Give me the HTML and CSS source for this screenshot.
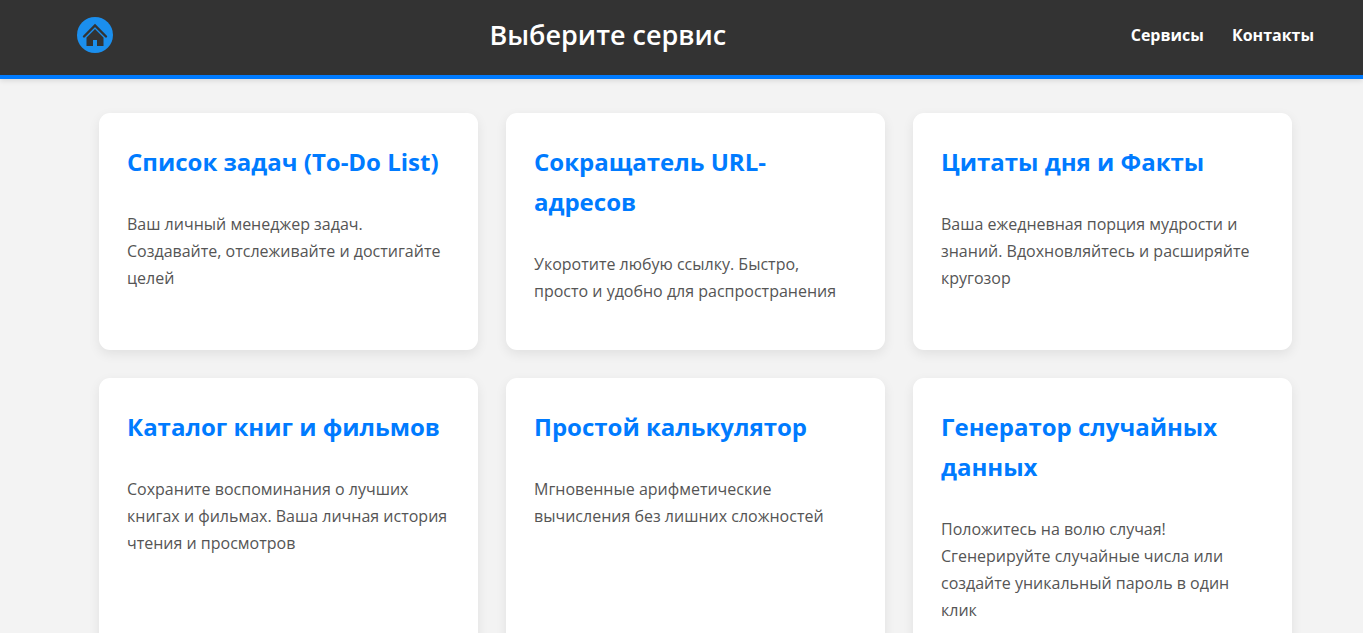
FILE: index.html
```html
<!DOCTYPE html>
<html lang="ru">
<head>
<meta charset="utf-8">
<meta name="viewport" content="width=device-width, initial-scale=1">
<title>Выберите сервис</title>
<link rel="stylesheet" href="styles.css">
</head>
<body>
<header class="header">
  <a class="logo" href="#" aria-label="Главная">
    <svg class="logo-icon" viewBox="0 0 36 36" aria-hidden="true">
      <circle cx="18" cy="18" r="18" fill="#1b8fee"/>
      <path d="M7 19.500 18 8.500 29 19.500" fill="none" stroke="#333" stroke-width="2.400" stroke-linecap="round"/>
      <path d="M18 12 26.500 20.500V29H20v-6h-4v6H9.500v-8.500z" fill="#333"/>
    </svg>
  </a>
  <h1 class="title">Выберите сервис</h1>
  <nav class="nav">
    <a class="nav-link" href="#">Сервисы</a>
    <a class="nav-link" href="#">Контакты</a>
  </nav>
</header>
<main class="services">
  <article class="card">
    <h2 class="card-title">Список задач (To-Do List)</h2>
    <p class="card-text">Ваш личный менеджер задач. Создавайте, отслеживайте и достигайте целей</p>
  </article>
  <article class="card">
    <h2 class="card-title">Сокращатель URL-адресов</h2>
    <p class="card-text">Укоротите любую ссылку. Быстро, просто и удобно для распространения</p>
  </article>
  <article class="card">
    <h2 class="card-title">Цитаты дня и Факты</h2>
    <p class="card-text">Ваша ежедневная порция мудрости и знаний. Вдохновляйтесь и расширяйте кругозор</p>
  </article>
  <article class="card">
    <h2 class="card-title">Каталог книг и фильмов</h2>
    <p class="card-text">Сохраните воспоминания о лучших книгах и фильмах. Ваша личная история чтения и просмотров</p>
  </article>
  <article class="card">
    <h2 class="card-title">Простой калькулятор</h2>
    <p class="card-text">Мгновенные арифметические вычисления без лишних сложностей</p>
  </article>
  <article class="card">
    <h2 class="card-title">Генератор случайных данных</h2>
    <p class="card-text">Положитесь на волю случая! Сгенерируйте случайные числа или создайте уникальный пароль в один клик</p>
  </article>
</main>
</body>
</html>
```

FILE: styles.css
```css
* {
  box-sizing: border-box;
}

html {
  scrollbar-width: none;
}

body {
  margin: 0;
  background: #f3f3f3;
  color: #333;
  font-family: "Segoe UI", "Open Sans", "Noto Sans", sans-serif;
  font-size: 16px;
  line-height: 27px;
}

.header {
  display: flex;
  align-items: center;
  gap: 28px;
  padding: 13px 49px 18px 77px;
  background: #333;
  border-bottom: 4px solid #007bff;
  box-shadow: 0 2px 5px rgba(0, 0, 0, 0.1);
}

.logo {
  display: flex;
  margin-right: -28px;
}

.logo-icon {
  display: block;
  width: 36px;
  height: 36px;
}

.title {
  flex: 1;
  margin: 0;
  color: #fff;
  font-size: 27px;
  font-weight: 600;
  line-height: 44px;
  text-align: center;
}

.nav {
  display: flex;
  gap: 28px;
}

.nav-link {
  color: #fff;
  font-size: 16px;
  font-weight: 700;
  text-decoration: none;
}

.services {
  display: grid;
  grid-template-columns: repeat(auto-fit, minmax(320px, 1fr));
  gap: 28px;
  padding: 34px 71px 34px 99px;
}

.card {
  padding: 29px 28px 28px;
  background: #fff;
  border-radius: 11px;
  box-shadow: 0 4px 12px rgba(0, 0, 0, 0.08);
}

.card-title {
  margin: 0 0 29px;
  color: #007bff;
  font-size: 24px;
  font-weight: 700;
  line-height: 40px;
}

.card-text {
  margin: 0 0 17px;
  color: #555;
}
```
